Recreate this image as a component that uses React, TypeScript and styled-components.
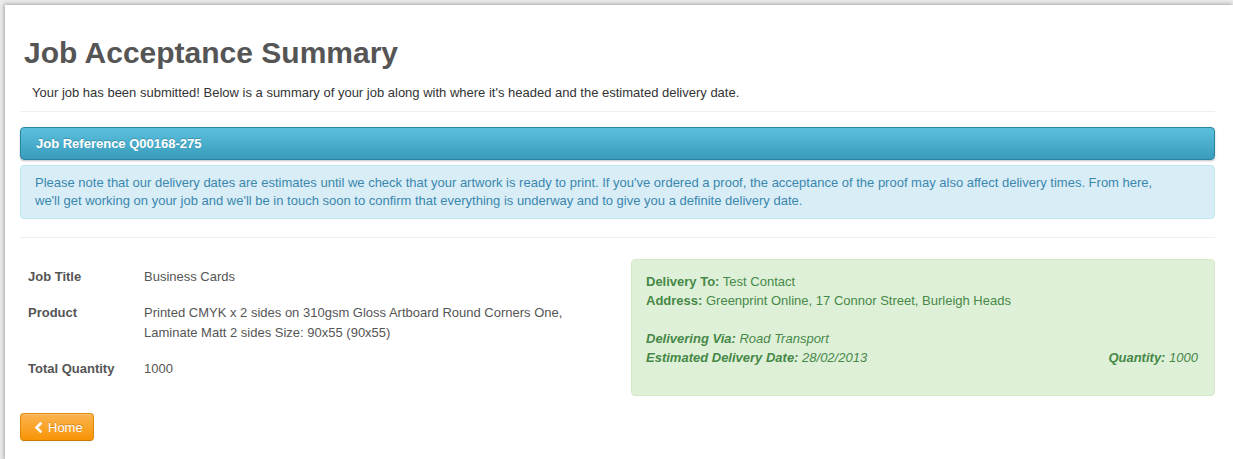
import React from "react";
import styled, { createGlobalStyle } from "styled-components";

const Global = createGlobalStyle`
  html, body { margin: 0; padding: 0; background: #ececec; overflow: hidden; }
  body { font-family: "Liberation Sans", Arial, Helvetica, sans-serif; font-size: 13px; line-height: 20px; color: #333; }
  #root { min-height: 459px; }
`;

const Page = styled.div`
  margin: 5px 0 0 5px;
  min-height: 454px;
  background: #fff;
  box-shadow: -1px -1px 4px rgba(0, 0, 0, 0.3);
  padding: 30px 18px 20px 15px;
  box-sizing: border-box;
`;

const Title = styled.h1`
  margin: 0 0 0 4px;
  font-size: 30px;
  line-height: 36px;
  font-weight: bold;
  color: #555;
`;

const Lead = styled.p`
  margin: 12px 0 0 12px;
  line-height: 20px;
  color: #333;
`;

const Rule = styled.hr<{ $top: number; $bottom: number }>`
  margin: ${(p) => `${p.$top}px 0 ${p.$bottom}px`};
  border: 0;
  border-top: 1px solid #eee;
  border-bottom: 1px solid #fff;
`;

const PanelHeading = styled.div`
  height: 31px;
  padding: 0 15px;
  display: flex;
  align-items: center;
  border: 1px solid #2a85a0;
  border-radius: 4px;
  background: linear-gradient(to bottom, #5bc0de, #3a9bbb);
  box-shadow: 0 1px 2px rgba(0, 0, 0, 0.25);
  color: #fff;
  font-weight: bold;
  text-shadow: 0 -1px 0 rgba(0, 0, 0, 0.2);
`;

const InfoAlert = styled.div`
  margin-top: 5px;
  padding: 8px 35px 8px 14px;
  line-height: 18px;
  background: #d9edf7;
  border: 1px solid #bce8f1;
  border-radius: 4px;
  color: #3a87ad;
`;

const Columns = styled.div`
  display: grid;
  grid-template-columns: 1fr 1fr;
  column-gap: 27px;
  align-items: start;
`;

const DetailTable = styled.table`
  border-collapse: collapse;
  width: 100%;
`;

const Label = styled.th`
  width: 100px;
  padding: 8px;
  text-align: left;
  vertical-align: top;
  font-weight: bold;
  color: #555;
`;

const Value = styled.td`
  padding: 8px;
  vertical-align: top;
  color: #555;
`;

const DeliveryBox = styled.div`
  padding: 12px 16px 28px 14px;
  line-height: 19px;
  background: #dff0d8;
  border: 1px solid #d6e9c6;
  border-radius: 4px;
  color: #468847;
`;

const Line = styled.div<{ $italic?: boolean }>`
  display: flex;
  justify-content: space-between;
  font-style: ${(p) => (p.$italic ? "italic" : "normal")};
  min-height: 19px;
`;

const HomeButton = styled.button`
  margin-top: 17px;
  display: inline-flex;
  align-items: center;
  gap: 6px;
  height: 28px;
  padding: 0 10px 0 13px;
  font-family: inherit;
  font-size: 13px;
  color: #fff;
  text-shadow: 0 -1px 0 rgba(0, 0, 0, 0.2);
  background: linear-gradient(to bottom, #fbb450, #f89406);
  border: 1px solid #e08a0a;
  border-bottom-color: #c97a05;
  border-radius: 4px;
  box-shadow: inset 0 1px 0 rgba(255, 255, 255, 0.2), 0 1px 2px rgba(0, 0, 0, 0.05);
  cursor: pointer;
`;

export default function App() {
  return (
    <>
      <Global />
      <Page>
        <Title>Job Acceptance Summary</Title>
        <Lead>
          Your job has been submitted! Below is a summary of your job along with where it's headed and the estimated delivery date.
        </Lead>
        <Rule $top={8} $bottom={14} />
        <PanelHeading>Job Reference Q00168-275</PanelHeading>
        <InfoAlert>
          Please note that our delivery dates are estimates until we check that your artwork is ready to print. If you've ordered a proof, the acceptance of the proof may also affect delivery times. From here, we'll get working on your job and we'll be in touch soon to confirm that everything is underway and to give you a definite delivery date.
        </InfoAlert>
        <Rule $top={18} $bottom={20} />
        <Columns>
          <DetailTable>
            <tbody>
              <tr>
                <Label>Job Title</Label>
                <Value>Business Cards</Value>
              </tr>
              <tr>
                <Label>Product</Label>
                <Value>
                  Printed CMYK x 2 sides on 310gsm Gloss Artboard Round Corners One, Laminate Matt 2 sides Size: 90x55 (90x55)
                </Value>
              </tr>
              <tr>
                <Label>Total Quantity</Label>
                <Value>1000</Value>
              </tr>
            </tbody>
          </DetailTable>
          <DeliveryBox>
            <Line>
              <span>
                <b>Delivery To:</b> Test Contact
              </span>
            </Line>
            <Line>
              <span>
                <b>Address:</b> Greenprint Online, 17 Connor Street, Burleigh Heads
              </span>
            </Line>
            <Line />
            <Line $italic>
              <span>
                <b>Delivering Via:</b> Road Transport
              </span>
            </Line>
            <Line $italic>
              <span>
                <b>Estimated Delivery Date:</b> 28/02/2013
              </span>
              <span>
                <b>Quantity:</b> 1000
              </span>
            </Line>
          </DeliveryBox>
        </Columns>
        <HomeButton>
          <svg width="8" height="11" viewBox="0 0 8 11" aria-hidden="true">
            <polyline points="6.5,1.5 2.5,5.5 6.5,9.5" fill="none" stroke="#fff" strokeWidth="2.6" strokeLinecap="square" />
          </svg>
          Home
        </HomeButton>
      </Page>
    </>
  );
}
